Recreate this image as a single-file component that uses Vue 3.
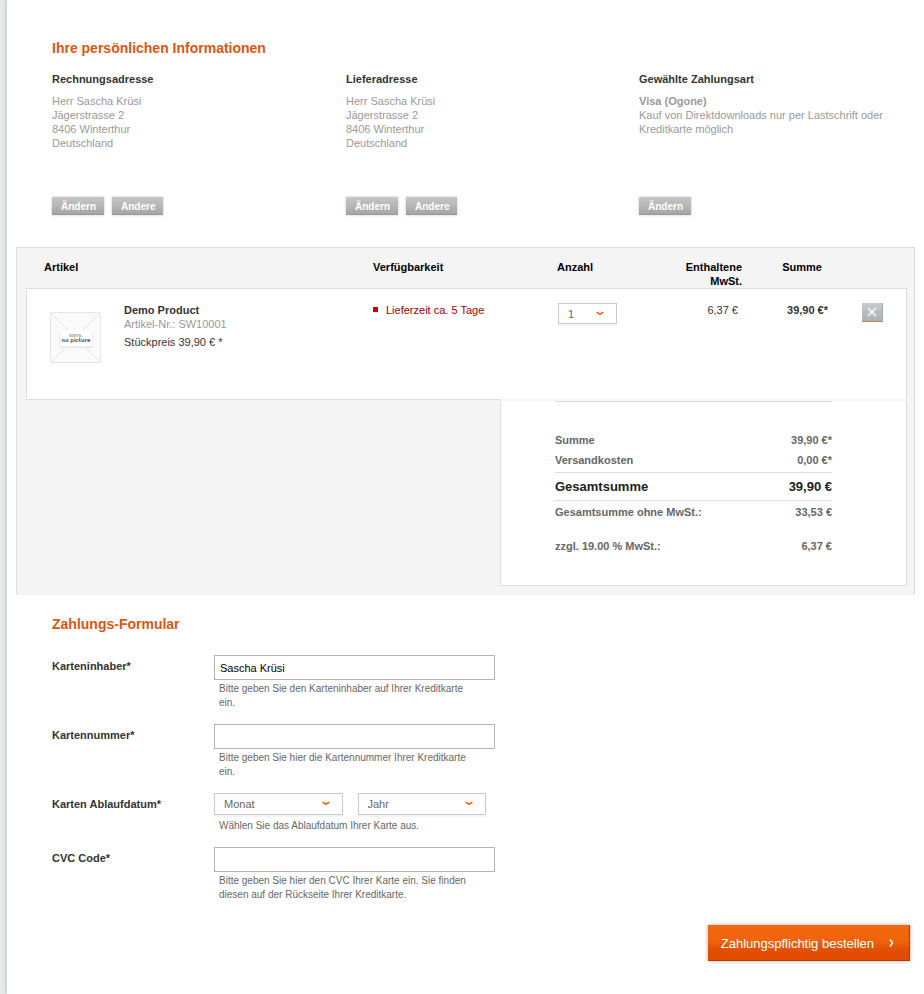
<script setup>
import { ref } from 'vue'

const addresses = [
  {
    title: 'Rechnungsadresse',
    lines: ['Herr Sascha Krüsi', 'Jägerstrasse 2', '8406 Winterthur', 'Deutschland'],
    actions: ['Ändern', 'Andere'],
  },
  {
    title: 'Lieferadresse',
    lines: ['Herr Sascha Krüsi', 'Jägerstrasse 2', '8406 Winterthur', 'Deutschland'],
    actions: ['Ändern', 'Andere'],
  },
  {
    title: 'Gewählte Zahlungsart',
    strong: 'Visa (Ogone)',
    lines: ['Kauf von Direktdownloads nur per Lastschrift oder Kreditkarte möglich'],
    actions: ['Ändern'],
  },
]

const totals = [
  { label: 'Summe', value: '39,90 €*', kind: 'first' },
  { label: 'Versandkosten', value: '0,00 €*', kind: 'shipping' },
  { label: 'Gesamtsumme', value: '39,90 €', kind: 'grand' },
  { label: 'Gesamtsumme ohne MwSt.:', value: '33,53 €', kind: 'net' },
  { label: 'zzgl. 19.00 % MwSt.:', value: '6,37 €', kind: 'tax' },
]

const months = Array.from({ length: 12 }, (_, i) => String(i + 1).padStart(2, '0'))
const years = Array.from({ length: 10 }, (_, i) => String(2013 + i))

const quantity = ref('1')
const holder = ref('Sascha Krüsi')
const number = ref('')
const month = ref('')
const year = ref('')
const cvc = ref('')
</script>

<template>
  <div class="shell">
    <main class="page">
      <section class="info">
        <h2 class="heading">Ihre persönlichen Informationen</h2>
        <div class="columns">
          <article v-for="item in addresses" :key="item.title" class="address">
            <h3>{{ item.title }}</h3>
            <div class="address-body">
              <strong v-if="item.strong">{{ item.strong }}</strong>
              <p v-for="line in item.lines" :key="line">{{ line }}</p>
            </div>
            <div class="actions">
              <button v-for="action in item.actions" :key="action" type="button" class="small-button">{{ action }}</button>
            </div>
          </article>
        </div>
      </section>

      <section class="basket">
        <table class="items">
          <colgroup>
            <col />
            <col class="col-stock" />
            <col class="col-qty" />
            <col class="col-tax" />
            <col class="col-sum" />
            <col class="col-remove" />
          </colgroup>
          <thead>
            <tr>
              <th class="th-article">Artikel</th>
              <th>Verfügbarkeit</th>
              <th>Anzahl</th>
              <th class="right">Enthaltene MwSt.</th>
              <th class="right th-sum">Summe</th>
              <td></td>
            </tr>
          </thead>
          <tbody>
            <tr>
              <td>
                <div class="product">
                  <svg class="thumb" viewBox="0 0 51 51" role="img" aria-label="sorry, no picture">
                    <rect x="0.5" y="0.5" width="50" height="50" rx="1" fill="#fafafa" stroke="#e6e6e6" />
                    <path d="M1 1L50 50M50 1L1 50" stroke="#e4e4e4" fill="none" />
                    <rect x="9" y="20" width="34" height="16" fill="#ececec" />
                    <rect x="10" y="18" width="32" height="16" fill="#fff" />
                    <text x="26" y="25" class="thumb-text thin">sorry,</text>
                    <text x="26" y="30" class="thumb-text">no picture</text>
                  </svg>
                  <div>
                    <strong>Demo Product</strong>
                    <p class="muted">Artikel-Nr.: SW10001</p>
                    <p class="unit">Stückpreis 39,90 € *</p>
                  </div>
                </div>
              </td>
              <td><span class="stock">Lieferzeit ca. 5 Tage</span></td>
              <td>
                <div class="select quantity">
                  <select v-model="quantity" aria-label="Anzahl">
                    <option>1</option>
                    <option>2</option>
                    <option>3</option>
                  </select>
                  <svg class="arrow" viewBox="0 0 8 5"><path d="M0.500 1.200L2.500 2.200L4 3.200L5.500 2.200L7.500 1.200" /></svg>
                </div>
              </td>
              <td class="right td-tax">6,37 €</td>
              <td class="right"><strong>39,90 €*</strong></td>
              <td class="td-remove">
                <button type="button" class="remove" aria-label="Löschen">
                  <svg viewBox="0 0 10 10"><path d="M1 1L9 9M9 1L1 9" /></svg>
                </button>
              </td>
            </tr>
          </tbody>
        </table>

        <div class="totals">
          <table>
            <tbody>
              <tr v-for="row in totals" :key="row.label" :class="row.kind">
                <th>{{ row.label }}</th>
                <td>{{ row.value }}</td>
              </tr>
            </tbody>
          </table>
        </div>
      </section>

      <form class="payment" @submit.prevent>
        <h2 class="heading">Zahlungs-Formular</h2>
        <div class="fields">
          <div class="field">
            <label for="holder">Karteninhaber*</label>
            <div class="control">
              <input id="holder" v-model="holder" type="text" />
              <p class="help">Bitte geben Sie den Karteninhaber auf Ihrer Kreditkarte ein.</p>
            </div>
          </div>
          <div class="field">
            <label for="number">Kartennummer*</label>
            <div class="control">
              <input id="number" v-model="number" type="text" />
              <p class="help">Bitte geben Sie hier die Kartennummer Ihrer Kreditkarte ein.</p>
            </div>
          </div>
          <div class="field">
            <label for="month">Karten Ablaufdatum*</label>
            <div class="control">
              <div class="dates">
                <div class="select">
                  <select id="month" v-model="month">
                    <option value="">Monat</option>
                    <option v-for="m in months" :key="m">{{ m }}</option>
                  </select>
                  <svg class="arrow" viewBox="0 0 8 5"><path d="M0.500 1.200L2.500 2.200L4 3.200L5.500 2.200L7.500 1.200" /></svg>
                </div>
                <div class="select">
                  <select v-model="year" aria-label="Jahr">
                    <option value="">Jahr</option>
                    <option v-for="y in years" :key="y">{{ y }}</option>
                  </select>
                  <svg class="arrow" viewBox="0 0 8 5"><path d="M0.500 1.200L2.500 2.200L4 3.200L5.500 2.200L7.500 1.200" /></svg>
                </div>
              </div>
              <p class="help">Wählen Sie das Ablaufdatum Ihrer Karte aus.</p>
            </div>
          </div>
          <div class="field">
            <label for="cvc">CVC Code*</label>
            <div class="control">
              <input id="cvc" v-model="cvc" type="text" />
              <p class="help">Bitte geben Sie hier den CVC Ihrer Karte ein. Sie finden diesen auf der Rückseite Ihrer Kreditkarte.</p>
            </div>
          </div>
        </div>
        <div class="submit-row">
          <button type="submit" class="submit">
            Zahlungspflichtig bestellen
            <svg viewBox="0 0 5 8"><path d="M1 0.5L3.500 4L1 7.500" /></svg>
          </button>
        </div>
      </form>
    </main>
  </div>
</template>

<style>
body {
  margin: 0;
}
</style>

<style scoped>
.shell {
  padding-left: 7px;
  background: #e8e9eb;
  overflow: hidden;
  font-family: "Liberation Sans", Arial, sans-serif;
  font-size: 11px;
  line-height: 14px;
  color: #333;
}
.shell * {
  box-sizing: border-box;
}
.page {
  min-height: 100vh;
  padding: 40px 9px 32px;
  background: #fff;
  box-shadow: 0 0 4px #aaa;
}
h2, h3, p {
  margin: 0;
}
button, input, select {
  font-family: inherit;
}
.heading {
  font-size: 14px;
  line-height: 16px;
  color: #e1540f;
}
.info {
  padding: 0 0 32px 36px;
}
.columns {
  display: grid;
  grid-template-columns: 294fr 293fr 276fr;
  margin-top: 16px;
}
.address h3 {
  font-size: 11px;
  line-height: 14px;
}
.address-body {
  min-height: 96px;
  margin-top: 8px;
  padding-right: 16px;
  color: #999;
}
.address-body strong {
  display: block;
}
.actions {
  display: flex;
  gap: 8px;
  padding-top: 7px;
}
.small-button {
  height: 18px;
  margin: 0;
  padding: 2px 8px 0 9px;
  border: 0;
  border-bottom: 1px solid #999;
  background: linear-gradient(#c6c6c6, #a6a6a6);
  box-shadow: 0 0 3px #ccc;
  color: #fff;
  font-size: 10px;
  font-weight: bold;
  line-height: 15px;
}
.basket {
  padding: 0 7px 9px 9px;
  border: 1px solid #ddd;
  border-bottom: 0;
  background: #f4f4f4;
}
.items {
  width: 100%;
  table-layout: fixed;
  border-spacing: 0;
}
.col-stock { width: 184px; }
.col-qty { width: 100px; }
.col-tax { width: 85px; }
.col-sum { width: 86px; }
.col-remove { width: 79px; }
.items th {
  padding: 12px 0 0;
  vertical-align: top;
  text-align: left;
  color: #000;
}
.items thead td {
  padding: 0;
}
.items .th-article {
  padding-left: 18px;
}
.items .right {
  text-align: right;
}
.items .th-sum {
  padding-right: 6px;
}
.items tbody td {
  height: 112px;
  padding: 14px 0 0;
  vertical-align: top;
  background: #fff;
  border: solid #ddd;
  border-width: 1px 0;
}
.items tbody td:first-child {
  border-left-width: 1px;
}
.items tbody td:last-child {
  border-right-width: 1px;
}
.items tbody .td-tax {
  padding-right: 4px;
}
.product {
  display: flex;
  gap: 23px;
  padding-left: 23px;
}
.thumb {
  width: 51px;
  height: 51px;
  margin-top: 9px;
}
.thumb-text {
  font: bold 5px "DejaVu Sans", sans-serif;
  text-anchor: middle;
  fill: #555;
}
.thumb-text.thin {
  font-weight: normal;
}
.muted {
  color: #999;
}
.unit {
  margin-top: 4px;
}
.stock {
  display: flex;
  gap: 8px;
  color: #a00000;
}
.stock::before {
  content: "";
  width: 5px;
  height: 5px;
  margin-top: 4px;
  background: #c00;
}
.select {
  position: relative;
  flex: 1;
}
.select select {
  display: block;
  width: 100%;
  height: 22px;
  margin: 0;
  padding: 0 24px 0 9px;
  appearance: none;
  border: 1px solid #c8c8c8;
  border-radius: 0;
  background: #fff;
  box-shadow: 0 2px 0 #f4f4f4;
  color: #666;
  font-size: 11px;
}
.arrow {
  position: absolute;
  top: 8px;
  right: 13px;
  width: 8px;
  height: 5px;
  fill: none;
  stroke: #ea6a1c;
  stroke-width: 1.700;
  pointer-events: none;
}
.quantity {
  width: 59px;
  margin-left: 1px;
}
.quantity select {
  height: 21px;
}
.td-remove .remove {
  display: flex;
  align-items: center;
  justify-content: center;
  width: 21px;
  height: 19px;
  margin-left: 34px;
  padding: 0;
  border: 0;
  border-right: 1px solid #a3a8ad;
  border-bottom: 1px solid #b9855f;
  background: linear-gradient(#c6c8ca, #aeb2b5);
}
.remove svg {
  width: 10px;
  height: 10px;
  stroke: #fff;
  stroke-width: 1.300;
}
.totals {
  width: 407px;
  margin: -1px 0 0 auto;
  padding: 0 74px 27px 54px;
  border: 1px solid #ddd;
  border-top: 2px solid #f4f4f4;
  background: #fff;
}
.totals table {
  width: 100%;
  border-top: 1px solid #ddd;
  border-spacing: 0;
  color: #666;
}
.totals th, .totals td {
  padding: 3px 0;
  text-align: left;
  font-weight: bold;
}
.totals td {
  text-align: right;
}
.totals .first > * {
  padding-top: 31px;
}
.totals .shipping > * {
  padding-bottom: 5px;
}
.totals .grand > * {
  padding: 6px 0;
  border: solid #ddd;
  border-width: 1px 0;
  color: #222;
  font-size: 13px;
  line-height: 15px;
}
.totals .net > * {
  padding: 4px 0 10px;
}
.totals .tax > * {
  padding: 10px 0 5px;
}
.payment {
  padding: 21px 0 0 36px;
}
.fields {
  display: flex;
  flex-direction: column;
  gap: 14px;
  margin-top: 23px;
}
.field {
  display: grid;
  grid-template-columns: 162px minmax(0, 281px);
}
.field label {
  padding-top: 4px;
  font-weight: bold;
}
.field input {
  display: block;
  width: 100%;
  height: 25px;
  margin: 0;
  padding: 1px 5px 0;
  border: 1px solid #b3b3b3;
  border-radius: 0;
  color: #000;
  font-size: 11px;
}
.dates {
  display: flex;
  gap: 15px;
  padding: 0 9px 2px 0;
}
.help {
  padding: 2px 20px 0 5px;
  font-size: 10px;
  color: #666;
}
.submit-row {
  display: flex;
  justify-content: flex-end;
  padding: 23px 5px 0 0;
}
.submit {
  display: flex;
  align-items: center;
  gap: 15px;
  height: 36px;
  margin: 0;
  padding: 1px 15px 0 13px;
  border: 0;
  border-right: 1px solid #c43200;
  border-bottom: 1px solid #c43200;
  background: linear-gradient(#f2690f, #f0630a 45%, #e25003 70%, #e04b00);
  box-shadow: 0 0 4px #aaa;
  color: #fff;
  font-size: 13px;
}
.submit svg {
  width: 5px;
  height: 8px;
  fill: none;
  stroke: #fff;
  stroke-width: 1.500;
}
</style>
